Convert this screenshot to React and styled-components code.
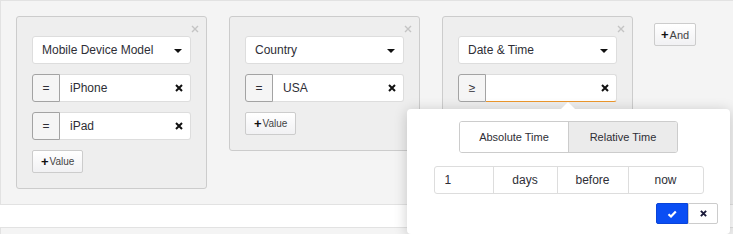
import React from 'react';
import styled, { createGlobalStyle } from 'styled-components';

const GlobalStyle = createGlobalStyle`
    html, body {
        margin: 0;
        padding: 0;
        background: #fff;
        overflow: hidden;
    }
    body {
        font-family: "Liberation Sans", Arial, sans-serif;
        color: #2e2e36;
    }
`;

const Panel = styled.div`
    display: flex;
    align-items: flex-start;
    gap: 22px;
    padding: 15px;
    background: #f4f4f4;
    border: 1px solid #e2e2e2;
    border-right: none;
`;

const NextPanel = styled.div`
    margin-top: 22px;
    height: 6px;
    background: #f4f4f4;
    border: 1px solid #e2e2e2;
    border-right: none;
    border-bottom: none;
`;

const Card = styled.div`
    position: relative;
    box-sizing: border-box;
    width: 191px;
    display: flex;
    flex-direction: column;
    gap: 10px;
    padding: 19px 15px 15px;
    background: #eee;
    border: 1px solid #ccc;
    border-radius: 3px;
`;

const CardClose = styled.div`
    position: absolute;
    top: 8px;
    right: 7px;
    width: 8px;
    height: 8px;
    display: flex;
`;

const Select = styled.div`
    box-sizing: border-box;
    height: 28px;
    display: flex;
    align-items: center;
    justify-content: space-between;
    padding: 0 8px 0 9px;
    background: #fff;
    border: 1px solid #ddd;
    border-radius: 3px;
    font-size: 12px;
`;

const Caret = styled.span`
    width: 0;
    height: 0;
    border-left: 4px solid transparent;
    border-right: 4px solid transparent;
    border-top: 4px solid #111;
    margin-top: 1px;
`;

const ValueRow = styled.div`
    position: relative;
    display: flex;
    height: 28px;
`;

const Operator = styled.div`
    box-sizing: border-box;
    width: 28px;
    display: flex;
    align-items: center;
    justify-content: center;
    background: #f5f5f5;
    border: 1px solid #a3a3a3;
    border-radius: 3px 0 0 3px;
    font-size: 12px;
`;

const ValueInput = styled.div`
    box-sizing: border-box;
    flex: 1;
    display: flex;
    align-items: center;
    justify-content: space-between;
    padding: 0 7px 0 10px;
    background: #fff;
    border: 1px solid #ddd;
    border-left: none;
    border-bottom-color: ${(p) => (p.$focused ? '#eb962c' : '#ddd')};
    border-radius: 0 3px 3px 0;
    font-size: 12px;
`;

const SmallButton = styled.div`
    box-sizing: border-box;
    align-self: flex-start;
    height: 23px;
    display: flex;
    align-items: center;
    padding: 0 ${(p) => (p.$pad || 8)}px;
    margin-top: ${(p) => p.$top || 0}px;
    margin-left: ${(p) => p.$left || 0}px;
    background: linear-gradient(#fff, #f1f1f3);
    border: 1px solid #ccc;
    border-radius: 2px;
    font-size: ${(p) => p.$size || 10}px;
    color: #444;
    b {
        font-size: 13px;
        color: #111;
        margin-right: 1px;
    }
`;

const Popover = styled.div`
    position: absolute;
    top: 35px;
    left: -51px;
    z-index: 10;
    box-sizing: border-box;
    width: 323px;
    height: 125px;
    display: flex;
    flex-direction: column;
    align-items: center;
    padding-top: 12px;
    background: #fff;
    border-radius: 4px;
    box-shadow: 0 2px 14px rgba(0, 0, 0, 0.2);
    &::before {
        content: '';
        position: absolute;
        top: -7px;
        left: 154px;
        border-left: 7px solid transparent;
        border-right: 7px solid transparent;
        border-bottom: 7px solid #fff;
    }
`;

const Tabs = styled.div`
    display: flex;
    width: 219px;
    height: 32px;
    box-sizing: border-box;
    border: 1px solid #ccc;
    border-radius: 3px;
    overflow: hidden;
`;

const Tab = styled.div`
    flex: 1;
    display: flex;
    align-items: center;
    justify-content: center;
    font-size: 11px;
    background: ${(p) => (p.$active ? '#ebebeb' : '#fff')};
    & + & {
        border-left: 1px solid #ccc;
    }
`;

const Fields = styled.div`
    display: flex;
    margin-top: 13px;
    height: 28px;
`;

const Field = styled.div`
    box-sizing: border-box;
    width: ${(p) => p.$w}px;
    display: flex;
    align-items: center;
    justify-content: ${(p) => (p.$left ? 'flex-start' : 'center')};
    padding-left: ${(p) => (p.$left ? 10 : 0)}px;
    border: 1px solid #ddd;
    margin-left: -1px;
    font-size: 12px;
    &:first-child {
        margin-left: 0;
        border-radius: 3px 0 0 3px;
    }
    &:last-child {
        border-radius: 0 3px 3px 0;
    }
`;

const Actions = styled.div`
    align-self: flex-end;
    display: flex;
    margin: 9px 12px 0 0;
    height: 21px;
`;

const ActionButton = styled.div`
    box-sizing: border-box;
    width: ${(p) => p.$w}px;
    display: flex;
    align-items: center;
    justify-content: center;
    background: ${(p) => (p.$primary ? '#0a4ef4' : '#fff')};
    border: 1px solid ${(p) => (p.$primary ? '#0a44d8' : '#ccc')};
    border-radius: ${(p) => (p.$primary ? '2px 0 0 2px' : '0 2px 2px 0')};
`;

const Cross = ({ size = 8, color = '#111', width = 2 }) => (
    <svg width={size} height={size} viewBox="0 0 8 8">
        <path d="M1 1L7 7M7 1L1 7" stroke={color} strokeWidth={width} />
    </svg>
);

const Check = () => (
    <svg width="10" height="8" viewBox="0 0 10 8">
        <path d="M1.5 4.2L4 6.5L8.8 1.5" fill="none" stroke="#fff" strokeWidth="2.2" />
    </svg>
);

const Value = ({ op = '=', text }) => (
    <ValueRow>
        <Operator>{op}</Operator>
        <ValueInput>
            <span>{text}</span>
            <Cross />
        </ValueInput>
    </ValueRow>
);

const CloseCard = () => (
    <CardClose>
        <Cross size={8} color="#c4c4c4" width={1.4} />
    </CardClose>
);

const Group = ({ field, children }) => (
    <Card>
        <CloseCard />
        <Select>
            <span>{field}</span>
            <Caret />
        </Select>
        {children}
        <SmallButton>
            <b>+</b>Value
        </SmallButton>
    </Card>
);

const App = () => {
    return (
        <>
            <GlobalStyle />
            <Panel>
                <Group field="Mobile Device Model">
                    <Value text="iPhone" />
                    <Value text="iPad" />
                </Group>
                <Group field="Country">
                    <Value text="USA" />
                </Group>
                <Group field="Date & Time">
                    <ValueRow>
                        <Operator>≥</Operator>
                        <ValueInput $focused>
                            <span></span>
                            <Cross />
                        </ValueInput>
                        <Popover>
                            <Tabs>
                                <Tab>Absolute Time</Tab>
                                <Tab $active>Relative Time</Tab>
                            </Tabs>
                            <Fields>
                                <Field $w={60} $left>1</Field>
                                <Field $w={65}>days</Field>
                                <Field $w={72}>before</Field>
                                <Field $w={76}>now</Field>
                            </Fields>
                            <Actions>
                                <ActionButton $primary $w={32}>
                                    <Check />
                                </ActionButton>
                                <ActionButton $w={30}>
                                    <Cross size={7} color="#1a1a3a" width={2.2} />
                                </ActionButton>
                            </Actions>
                        </Popover>
                    </ValueRow>
                </Group>
                <SmallButton $top={7} $left={-1} $size={11} $pad={6}>
                    <b>+</b>And
                </SmallButton>
            </Panel>
            <NextPanel />
        </>
    );
};

export default App;
